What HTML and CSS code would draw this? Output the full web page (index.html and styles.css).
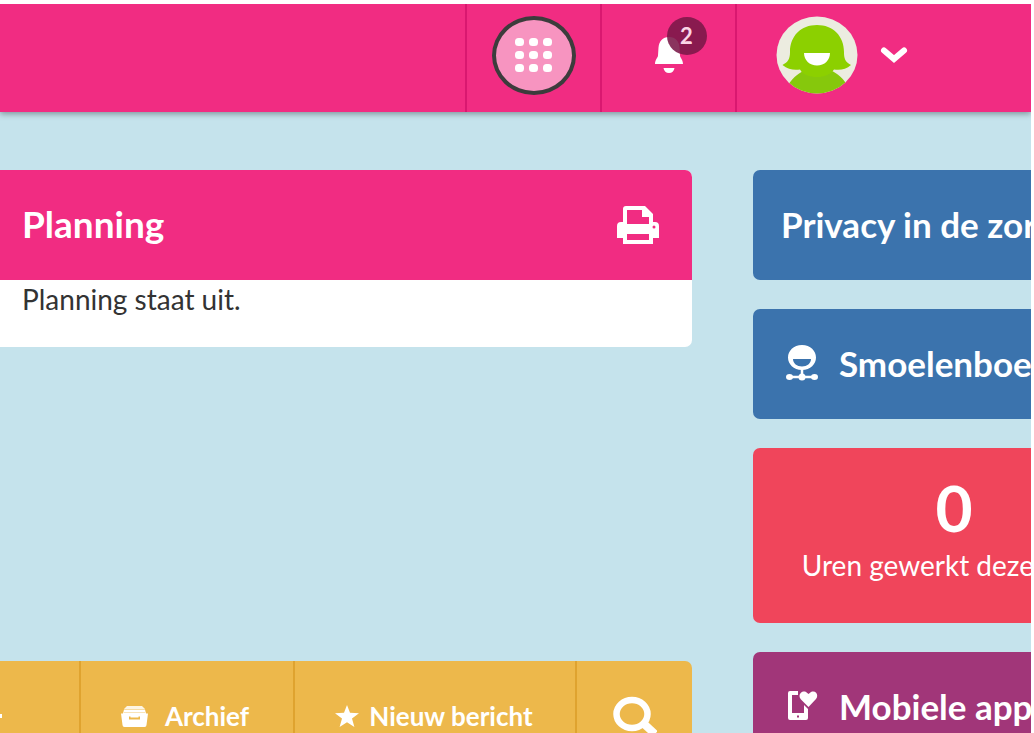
FILE: index.html
```html
<!DOCTYPE html>
<html lang="nl">
<head>
  <meta charset="UTF-8">
  <meta name="viewport" content="width=device-width, initial-scale=1">
  <title>Planning</title>
  <link rel="stylesheet" href="styles.css">
</head>
<body>
<div class="page">

  <header class="topbar">
    <button type="button" class="topbar-item" aria-label="Apps">
      <span class="apps-circle">
        <svg width="40" height="36" viewBox="0 0 40 36" fill="#fff">
          <rect x="1" y="1" width="9" height="8" rx="3.500"/><rect x="15" y="1" width="9" height="8" rx="3.500"/><rect x="29" y="1" width="9" height="8" rx="3.500"/>
          <rect x="1" y="14" width="9" height="8" rx="3.500"/><rect x="15" y="14" width="9" height="8" rx="3.500"/><rect x="29" y="14" width="9" height="8" rx="3.500"/>
          <rect x="1" y="27" width="9" height="8" rx="3.500"/><rect x="15" y="27" width="9" height="8" rx="3.500"/><rect x="29" y="27" width="9" height="8" rx="3.500"/>
        </svg>
      </span>
    </button>
    <button type="button" class="topbar-item" aria-label="Meldingen">
      <span class="bell">
        <svg width="28" height="37" viewBox="0 0 28 37" fill="#fff">
          <path d="M14 0C7.500 0 4 4.500 3.500 10.500L3 18.500C2.800 21 0 22.500 0 27h28c0-4.500-2.800-6-3-8.500L24.500 10.500C24 4.500 20.500 0 14 0z"/>
          <path d="M8.500 31h11c-.5 3-2.500 5-5.500 5s-5-2-5.500-5z"/>
        </svg>
        <span class="badge">2</span>
      </span>
    </button>
    <button type="button" class="topbar-item topbar-user" aria-label="Profiel">
      <svg width="82" height="78" viewBox="0 0 82 78">
        <defs>
          <clipPath id="avatar"><ellipse cx="41" cy="39" rx="40.500" ry="38.500"/></clipPath>
        </defs>
        <ellipse cx="41" cy="39" rx="40.500" ry="38.500" fill="#ecece0"/>
        <g clip-path="url(#avatar)" fill="#8cd000">
          <path d="M12 69C18 60 24 57 28 54.500Q41 64 55 54.500C62 58 67 62 71 69L60 80H22z" fill="#86c80c"/>
          <path d="M41 9C25 9 14 20 14 36C14 43 12 46 6.500 49C12 53.500 18 54.500 24 53.500C27 59 34 61 41 61S54 59 58 53.500C64 54.500 70 53.500 75 49C69 46 68 42 68 36C68 20 57 9 41 9z"/>
        </g>
        <path d="M28 37h26c0 7-5.500 12.500-13 12.500S28 44 28 37z" fill="#fff"/>
      </svg>
      <svg width="28" height="18" viewBox="0 0 28 18" fill="none" stroke="#fff" stroke-width="6" stroke-linecap="round">
        <path d="M4 4.500L14 13L24 4.500"/>
      </svg>
    </button>
  </header>

  <main class="board">
    <div class="column column-main">
      <section class="card planning">
        <div class="card-header">
          <h2>Planning</h2>
          <button type="button" class="print" aria-label="Afdrukken">
            <svg width="42" height="38" viewBox="0 0 42 38">
              <path fill="#fff" fill-rule="evenodd" d="M9 0h19l8 8v8h2a4 4 0 0 1 4 4v12h-6v6H6v-6H0V20a4 4 0 0 1 4-4h2V3a3 3 0 0 1 3-3zM10 4v14h22V11h-7V4zM10 28v6h22v-6z"/>
              <ellipse cx="37" cy="21" rx="1.500" ry="1.500" fill="#f12c82"/>
            </svg>
          </button>
        </div>
        <p class="card-text">Planning staat uit.</p>
      </section>

      <nav class="card messages">
        <a href="#" class="tab tab-first" aria-label="Inbox"></a>
        <a href="#" class="tab tab-archive">
          <svg width="27" height="21" viewBox="0 0 27 21">
            <path fill="#fff" d="M6 0h15l3 3H3z" opacity=".85"/>
            <path fill="#fff" fill-rule="evenodd" d="M3 3.500h21l1 4h2L25.500 19a2 2 0 0 1-2 2h-20a2 2 0 0 1-2-2L0 7.500h2zM8 10.500v3h11v-3h-1.500v1h-8v-1z"/>
            <path d="M3 6.500h21" stroke="#edb84b" stroke-width=".4"/>
          </svg>
          Archief
        </a>
        <a href="#" class="tab tab-new">
          <svg width="24" height="22" viewBox="0 0 24 22" fill="#fff">
            <path d="M12 0l3 7.800 9 .5-7 5.200 2.400 8.500L12 17.200 4.600 22 7 13.500 0 8.300l9-.5z"/>
          </svg>
          Nieuw bericht
        </a>
        <a href="#" class="tab tab-search" aria-label="Zoeken">
          <svg width="44" height="40" viewBox="0 0 44 40" fill="none" stroke="#fff">
            <ellipse cx="19" cy="18" rx="15.500" ry="14" stroke-width="6.500"/>
            <path d="M30 27L42 38" stroke-width="8"/>
          </svg>
        </a>
      </nav>
    </div>

    <div class="column column-side">
      <a href="#" class="card tile blue">Privacy in de zorg</a>
      <a href="#" class="card tile blue">
        <span class="tile-icon">
          <svg width="32" height="36" viewBox="0 0 32 36">
            <path fill="#fff" fill-rule="evenodd" d="M16 0C24.500 0 30 6 30 12.500S24.500 25 16 25S2 19 2 12.500S7.500 0 16 0zM7 14c0 4.500 4 7.500 9 7.500s9-3 9-7.500z"/>
            <path stroke="#fff" stroke-width="2.500" d="M16 24v8M3 32h26"/>
            <ellipse cx="3.500" cy="32" rx="3.500" ry="3" fill="#fff"/><ellipse cx="16" cy="32" rx="3.500" ry="3.500" fill="#fff"/><ellipse cx="28.500" cy="32" rx="3.500" ry="3" fill="#fff"/>
          </svg>
        </span>
        Smoelenboek
      </a>
      <section class="card hours">
        <strong>0</strong>
        <span>Uren gewerkt deze week</span>
      </section>
      <a href="#" class="card tile purple">
        <span class="tile-icon">
          <svg width="32" height="32" viewBox="0 0 32 32" fill="#fff">
            <path fill-rule="evenodd" d="M4 1H12V5H6V23H18V15L22 19V28a2 2 0 0 1-2 2H4a2 2 0 0 1-2-2V3a2 2 0 0 1 2-2zM11 25.500v2h2v-2z"/>
            <path d="M22.500 17L15 9.500C11 5 16 0 20 2L22.500 4L25 2C30 0 33 5 30 9z"/>
          </svg>
        </span>
        Mobiele app
      </a>
    </div>
  </main>

</div>
</body>
</html>
```
FILE: styles.css
```css
* { box-sizing: border-box; }

body {
  margin: 0;
  padding: 4px 3px 0 0;
  height: 100vh;
  background: #fff;
  font-family: Lato, "Liberation Sans", sans-serif;
  color: #333;
  overflow: hidden;
}

.page {
  height: 100%;
  background: #c5e3ec;
  overflow: hidden;
}

h2, p { margin: 0; }

a {
  color: inherit;
  text-decoration: none;
}

svg {
  display: block;
  flex: none;
}

button {
  border: 0;
  padding: 0;
  background: none;
  font: inherit;
  color: inherit;
  cursor: pointer;
}

/* top bar */
.topbar {
  display: flex;
  justify-content: flex-end;
  height: 108px;
  background: #f12c82;
  box-shadow: 0 2px 6px rgba(0, 0, 0, 0.35);
}

.topbar-item {
  display: flex;
  align-items: center;
  justify-content: center;
  width: 135px;
  padding-bottom: 6px;
  border-left: 2px solid #d91870;
}

.topbar-user {
  width: 296px;
  justify-content: flex-start;
  gap: 22px;
  padding-left: 39px;
}

.apps-circle {
  display: flex;
  align-items: center;
  justify-content: center;
  width: 84px;
  height: 79px;
  border: 4px solid #3c3c3c;
  border-radius: 50%;
  background: #f794c0;
}

.bell { position: relative; }

.badge {
  position: absolute;
  left: 12px;
  top: -20px;
  width: 40px;
  height: 38px;
  border-radius: 50%;
  background: rgba(122, 24, 72, 0.88);
  color: #fbd5e6;
  font-size: 22px;
  font-weight: bold;
  line-height: 38px;
  text-align: center;
}

/* widgets */
.board {
  display: grid;
  grid-template-columns: minmax(0, 1fr) 278px;
  gap: 61px;
  padding-top: 58px;
}

.column {
  display: flex;
  flex-direction: column;
}

.column-main { gap: 314px; }

.column-side {
  gap: 29px;
  width: 402px;
}

.card {
  border-radius: 7px;
  overflow: hidden;
}

.planning,
.messages {
  border-top-left-radius: 0;
  border-bottom-left-radius: 0;
}

.planning { background: #fff; }

.card-header {
  display: flex;
  align-items: center;
  justify-content: space-between;
  height: 110px;
  padding: 0 33px 0 22px;
  background: #f12c82;
  color: #fff;
}

.card-header h2 {
  padding-bottom: 2px;
  font-size: 37px;
  line-height: 44px;
}

.card-text {
  padding: 1px 22px 30px;
  font-size: 28px;
  line-height: 36px;
}

.messages {
  display: flex;
  height: 110px;
  background: #edb84b;
  color: #fff;
  font-size: 26px;
  font-weight: bold;
}

.tab {
  display: flex;
  align-items: center;
  justify-content: center;
  white-space: nowrap;
}

.tab + .tab { border-left: 2px solid #dfa32f; }

.tab-first {
  flex: 1;
  justify-content: flex-start;
}

.tab-first::before {
  content: "";
  width: 2px;
  height: 4px;
  background: #fff;
}

.tab-archive {
  width: 214px;
  gap: 17px;
  padding-right: 4px;
}

.tab-new {
  width: 282px;
  gap: 10px;
  padding-right: 2px;
}

.tab-search { width: 117px; }

.tile {
  display: flex;
  align-items: center;
  height: 110px;
  padding: 0 28px 2px;
  color: #fff;
  font-size: 35px;
  font-weight: bold;
  white-space: nowrap;
}

.tile-icon {
  width: 58px;
  padding-left: 5px;
}

.blue { background: #3b73ad; }

.purple { background: #a13679; }

.hours {
  display: flex;
  flex-direction: column;
  align-items: center;
  height: 175px;
  padding-top: 22px;
  background: #f0455b;
  color: #fff;
  white-space: nowrap;
}

.hours strong {
  font-size: 64px;
  line-height: 76px;
}

.hours span {
  font-size: 28px;
  line-height: 38px;
}
```
